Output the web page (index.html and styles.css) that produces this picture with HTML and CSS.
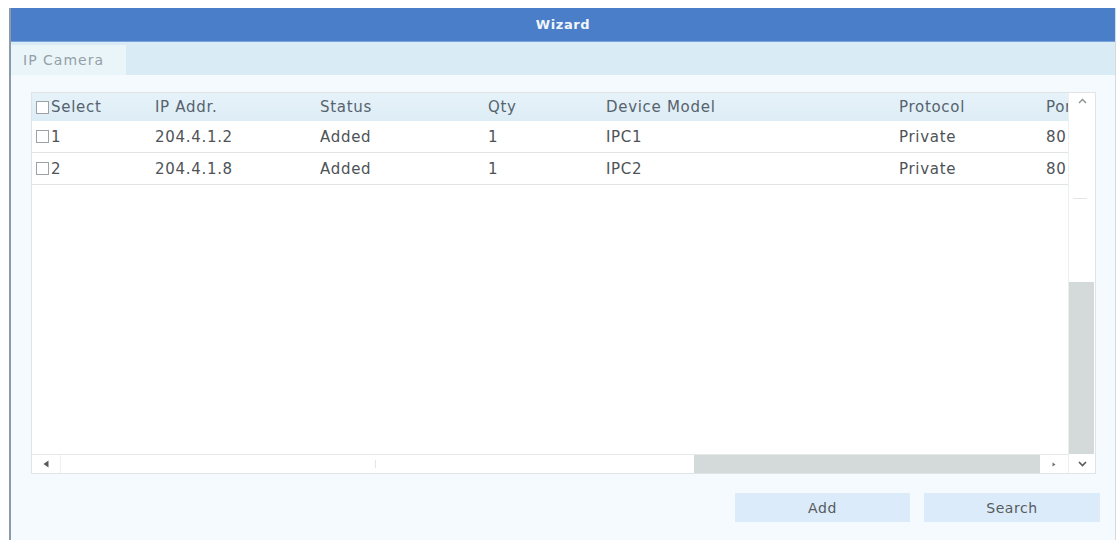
FILE: index.html
```html
<!DOCTYPE html>
<html>
<head>
<meta charset="utf-8">
<link rel="stylesheet" href="styles.css">
</head>
<body>
<div class="window">
  <div class="titlebar">Wizard</div>
  <div class="tabbar"><div class="tab">IP Camera</div></div>
  <div class="content">
    <div class="table">
      <div class="viewport">
        <div class="row head">
          <div class="c c1"><span class="cb"></span>Select</div>
          <div class="c">IP Addr.</div>
          <div class="c">Status</div>
          <div class="c">Qty</div>
          <div class="c">Device Model</div>
          <div class="c">Protocol</div>
          <div class="c">Port</div>
        </div>
        <div class="row">
          <div class="c c1"><span class="cb"></span>1</div>
          <div class="c">204.4.1.2</div>
          <div class="c">Added</div>
          <div class="c">1</div>
          <div class="c">IPC1</div>
          <div class="c">Private</div>
          <div class="c">80</div>
        </div>
        <div class="row">
          <div class="c c1"><span class="cb"></span>2</div>
          <div class="c">204.4.1.8</div>
          <div class="c">Added</div>
          <div class="c">1</div>
          <div class="c">IPC2</div>
          <div class="c">Private</div>
          <div class="c">80</div>
        </div>
      </div>
      <div class="vscroll">
        <div class="sbtn up"><svg width="9" height="6" viewBox="0 0 9 6"><path d="M1 5 L4.5 1.5 L8 5" fill="none" stroke="#8a8f92" stroke-width="1.4"/></svg></div>
        <div class="vtrack"><span class="vmark"></span><div class="vthumb"></div></div>
        <div class="sbtn down"><svg width="9" height="6" viewBox="0 0 9 6"><path d="M1 1 L4.5 4.5 L8 1" fill="none" stroke="#55595c" stroke-width="1.6"/></svg></div>
      </div>
      <div class="hscroll">
        <div class="hbtn left"><svg width="6" height="8" viewBox="0 0 6 8"><path d="M5.5 0.5 L0.5 4 L5.5 7.5 Z" fill="#55595c"/></svg></div>
        <div class="htrack"><span class="hmark"></span><div class="hthumb"></div></div>
        <div class="hbtn right"><svg width="4" height="5" viewBox="0 0 4 5"><path d="M0.5 0.5 L3.5 2.5 L0.5 4.5 Z" fill="#6a6e70"/></svg></div>
      </div>
    </div>
    <div class="actions">
      <button class="btn add">Add</button>
      <button class="btn">Search</button>
    </div>
  </div>
</div>
</body>
</html>
```

FILE: styles.css
```css
* { box-sizing: border-box; }
html, body { margin: 0; padding: 0; background: #ffffff; }
body {
  font-family: "DejaVu Sans", "Liberation Sans", sans-serif;
  width: 1118px;
  height: 540px;
  overflow: hidden;
  padding: 8px 0 0 9px;
}
.window {
  width: 1107px;
  height: 532px;
  border-left: 2px solid #8d9aa8;
  border-right: 1px solid #d3dade;
  background: #f4fafd;
  display: flex;
  flex-direction: column;
}
.titlebar {
  height: 34px;
  background: #4b7ec8;
  border-bottom: 1px solid #7aa3dc;
  color: #f2f6fc;
  font-weight: bold;
  font-size: 13px;
  letter-spacing: 0.6px;
  display: flex;
  align-items: center;
  justify-content: center;
}
.tabbar {
  height: 33px;
  background: #d9ecf5;
  display: flex;
}
.tab {
  width: 115px;
  margin-top: 3px;
  background: #eaf5fa;
  color: #949fa6;
  font-size: 14px;
  letter-spacing: 1px;
  padding-left: 12px;
  display: flex;
  align-items: center;
}
.content {
  flex: 1;
  padding: 17px 19px 0 20px;
  display: flex;
  flex-direction: column;
}
.table {
  height: 382px;
  border: 1px solid #dfe4e6;
  background: #ffffff;
  display: grid;
  grid-template-columns: 1fr 27px;
  grid-template-rows: 1fr 19px;
}
.viewport {
  grid-column: 1;
  grid-row: 1;
  overflow: hidden;
}
.row {
  display: grid;
  grid-template-columns: 119px 165px 168px 118px 293px 147px 80px;
  padding-left: 4px;
  height: 32px;
  border-bottom: 1px solid #e0e4e6;
  color: #4e5357;
  font-size: 15px;
  letter-spacing: 0.7px;
  width: 1120px;
}
.row.head {
  height: 28px;
  background: linear-gradient(#e7f2f9, #ddedf6);
  border-bottom: none;
  color: #56636e;
}
.c {
  display: flex;
  align-items: center;
  white-space: nowrap;
}
.cb {
  width: 13px;
  height: 13px;
  border: 1px solid #9da2a6;
  background: #ffffff;
  margin-right: 2px;
  flex: none;
}
.vscroll {
  grid-column: 2;
  grid-row: 1 / 3;
  display: flex;
  flex-direction: column;
  border-left: 1px solid #eceff0;
}
.sbtn {
  height: 19px;
  display: flex;
  align-items: center;
  justify-content: center;
}
.sbtn.up { height: 16px; }
.vtrack {
  flex: 1;
  display: flex;
  flex-direction: column;
  justify-content: flex-end;
  position: relative;
}
.vmark {
  position: absolute;
  left: 4px;
  top: 89px;
  width: 14px;
  height: 1px;
  background: #e3e6e7;
}
.vthumb {
  height: 172px;
  background: #d4d9d9;
  margin-right: 1px;
}
.hscroll {
  grid-column: 1;
  grid-row: 2;
  display: flex;
  border-top: 1px solid #e6e9ea;
}
.hbtn {
  width: 28px;
  display: flex;
  align-items: center;
  justify-content: center;
}
.htrack {
  flex: 1;
  display: flex;
  justify-content: flex-end;
  position: relative;
  border-left: 1px solid #eef0f1;
}
.hmark {
  position: absolute;
  left: 314px;
  top: 5px;
  width: 1px;
  height: 8px;
  background: #e3e6e7;
}
.hthumb {
  width: 346px;
  background: #d4d9d9;
}
.actions {
  display: flex;
  justify-content: flex-end;
  gap: 14px;
  margin-top: 19px;
  margin-right: -4px;
}
.btn {
  width: 175px;
  height: 29px;
  border: none;
  background: #dcebf9;
  color: #555b60;
  font-family: "DejaVu Sans", "Liberation Sans", sans-serif;
  font-size: 14px;
  letter-spacing: 0.6px;
  padding: 0;
}
.btn + .btn { width: 176px; }
```
